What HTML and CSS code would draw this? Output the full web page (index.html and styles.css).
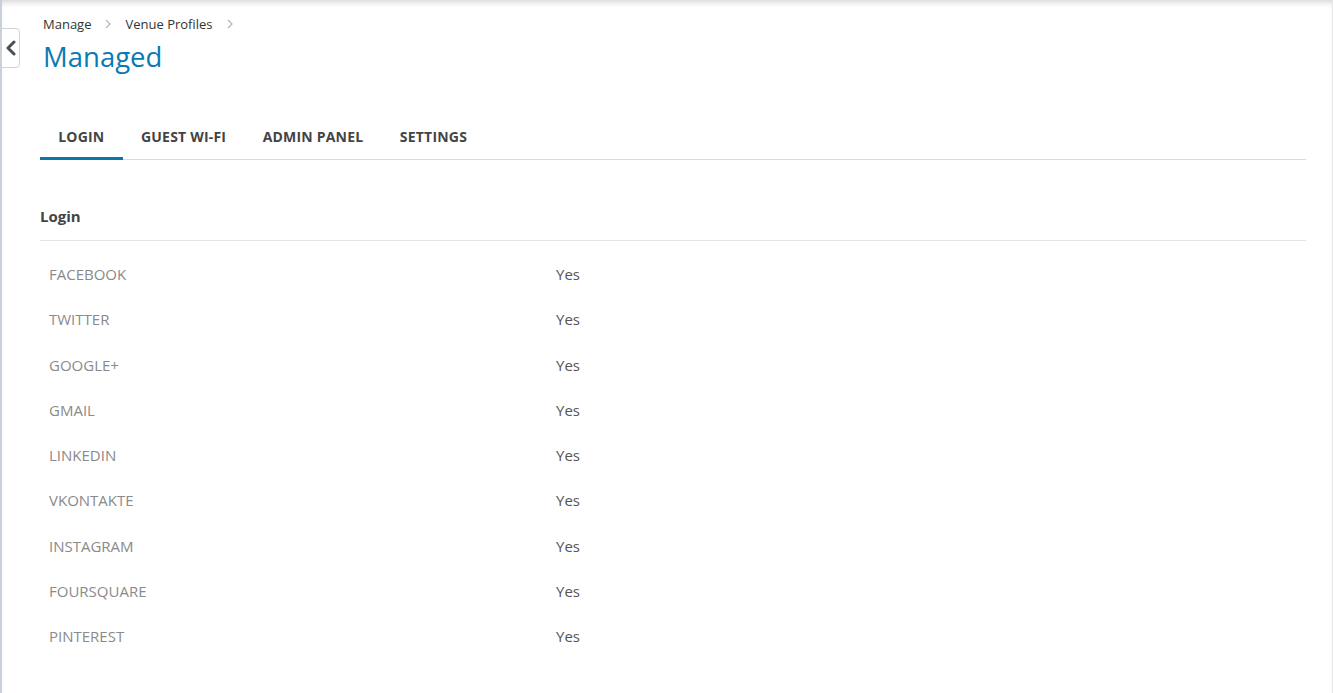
FILE: index.html
```html
<!DOCTYPE html>
<html lang="en">
<head>
  <meta charset="UTF-8" />
  <title>Managed - Venue Profiles</title>
  <link rel="stylesheet" href="styles.css">
</head>
<body>

<div class="page">
  <!-- Sidebar toggle -->
  <button class="collapse-btn" aria-label="Collapse">
    <svg width="12" height="16" viewBox="0 0 12 16"><path d="M9 2 L3 8 L9 14" fill="none" stroke="#4a4f55" stroke-width="3" stroke-linecap="round" stroke-linejoin="round"/></svg>
  </button>

  <!-- Header -->
  <div class="header">
    <div class="breadcrumb">
      <span>Manage</span>
      <svg class="sep" width="6" height="10" viewBox="0 0 6 10"><path d="M1 1 L5 5 L1 9" fill="none" stroke="#b5b5b5" stroke-width="1.2"/></svg>
      <span>Venue Profiles</span>
      <svg class="sep" width="6" height="10" viewBox="0 0 6 10"><path d="M1 1 L5 5 L1 9" fill="none" stroke="#b5b5b5" stroke-width="1.2"/></svg>
    </div>
    <h1 class="title">Managed</h1>
  </div>

  <!-- Tabs -->
  <div class="content">
    <div class="tabs">
      <div class="tab active">Login</div>
      <div class="tab">Guest Wi-Fi</div>
      <div class="tab">Admin Panel</div>
      <div class="tab">Settings</div>
    </div>

    <div class="section">
      <div class="section-title">Login</div>
      <div class="rows">
        <div class="row"><span class="label">FACEBOOK</span><span class="value">Yes</span></div>
        <div class="row"><span class="label">TWITTER</span><span class="value">Yes</span></div>
        <div class="row"><span class="label">GOOGLE+</span><span class="value">Yes</span></div>
        <div class="row"><span class="label">GMAIL</span><span class="value">Yes</span></div>
        <div class="row"><span class="label">LINKEDIN</span><span class="value">Yes</span></div>
        <div class="row"><span class="label">VKONTAKTE</span><span class="value">Yes</span></div>
        <div class="row"><span class="label">INSTAGRAM</span><span class="value">Yes</span></div>
        <div class="row"><span class="label">FOURSQUARE</span><span class="value">Yes</span></div>
        <div class="row"><span class="label">PINTEREST</span><span class="value">Yes</span></div>
      </div>
    </div>
  </div>
</div>

</body>
</html>
```

FILE: styles.css
```css
* { box-sizing: border-box; margin: 0; padding: 0; }
html, body { height: 100%; }
body { font-family: 'Open Sans', 'Noto Sans', sans-serif; background: #fff; color: #444; }

.page {
  position: relative;
  min-height: 100%;
  border-left: 2px solid #c9d0d8;
  border-right: 1px solid #e6e6e6;
  box-shadow: inset 0 6px 6px -4px rgba(0,0,0,0.18);
  padding: 0 26px 0 38px;
}

.collapse-btn {
  position: absolute;
  top: 28px; left: -1px;
  width: 19px; height: 40px;
  background: #fff;
  border: 1px solid #cfd3d7;
  border-radius: 0 4px 4px 0;
  display: flex;
  align-items: center;
  justify-content: center;
  cursor: pointer;
}

.header { padding: 15px 0 0 3px; }

.breadcrumb {
  display: flex;
  align-items: center;
  font-size: 13px;
  color: #333;
  line-height: 18px;
}
.breadcrumb .sep { margin: 0 14px; }

.title {
  font-size: 27.5px;
  font-weight: 400;
  color: #0a7ab3;
  line-height: 36px;
  margin-top: 6px;
}

.tabs {
  display: flex;
  border-bottom: 1px solid #d8dadc;
  margin-top: 44px;
}

.tab {
  font-size: 14px;
  font-weight: 700;
  text-transform: uppercase;
  letter-spacing: 0.2px;
  color: #444;
  padding: 8px 18.25px 11px;
  line-height: 19px;
  margin-bottom: -1px;
  border-bottom: 3px solid transparent;
}

.tab.active { border-bottom-color: #0a77aa; }

.section { margin-top: 46px; }

.section-title {
  font-size: 15px;
  font-weight: 700;
  color: #444;
  padding-bottom: 14px;
  border-bottom: 1px solid #e3e4e6;
  line-height: 20px;
}

.rows { padding: 23px 0 0 9px; }

.row {
  display: flex;
  font-size: 15px;
  line-height: 20px;
  height: 45.25px;
}

.label { width: 507px; color: #8a8a8a; }
.value { color: #555; }
```
